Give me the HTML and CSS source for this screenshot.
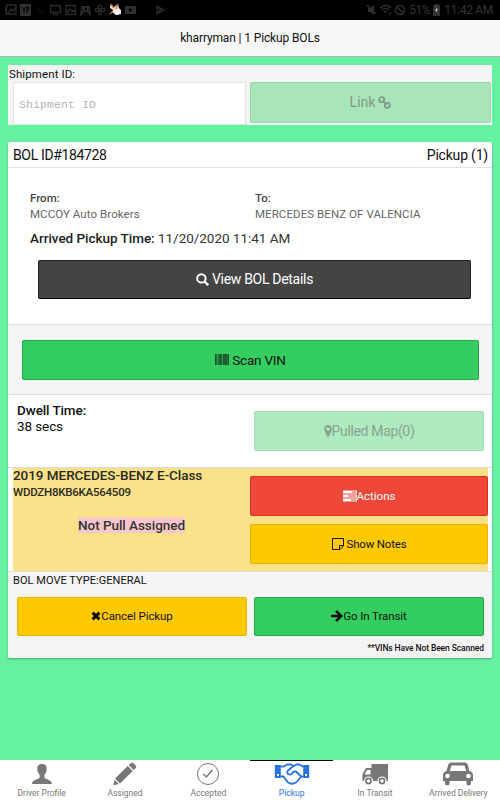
FILE: index.html
```html
<!DOCTYPE html>
<html lang="en">
<head>
<meta charset="utf-8">
<title>Pickup BOLs</title>
<link rel="stylesheet" href="styles.css">
</head>
<body>
<div class="status">
  <svg class="notif" width="170" height="20" viewBox="0 0 170 20" fill="none" stroke="#2b2b2b" stroke-width="1.3">
    <path d="M6 6v8h9M7 5h9v9H6zM8 13l3-4 2 2 3-4"/>
    <path d="M20 4h11v12H20z" fill="#303030" stroke="none"/><path d="M22 7l2 3v3m2-6l-2 3m3 3V7h1q2 1 0 3h-1" stroke="#000" stroke-width="1"/>
    <path d="M38 7q1 5 6 6" stroke="#101010"/>
    <path d="M50.500 5.500h10v7h-10zM53 14.500h5"/>
    <path d="M66 5.500h9.500v9H66zM67 13l3-4 2 2 1-1 2 3"/>
    <path d="M81 14l1-7h7l1 7-3-3h-3zM83 9h2m2 0h1" stroke-width="1.800"/>
    <path d="M100 10q-4-4 0-5 3 1 0 5 5-3 5 0-1 3-5 0 3 5 0 5-3-1 0-5-5 3-5 0 1-3 5 0"/>
    <path d="M110 5l4 2 4-3 1 4 2 2v4l-5 1-4-3 1-2-3-2z" fill="#f4ddcc" stroke="none"/><path d="M111 4l3 4m4-4l-2 5m-4 3l-2 2" stroke="#c46b38"/><path d="M115 10l4-1 1 5-4 1z" fill="#fff" stroke="none"/>
    <path d="M125 6h11v8h-11z" fill="#303030" stroke="none"/><path d="M129 8l4 2-4 2z" fill="#000" stroke="none"/>
    <path d="M157 6l7 4-7 4zM157 6l4 5m0-2l-4 5"/>
  </svg>
  <div class="system">
    <svg width="40" height="20" viewBox="0 0 40 20" fill="none" stroke="#303030" stroke-width="1.400">
      <path d="M2 8h2l4-3v10l-4-3H2z" fill="#303030" stroke="none"/><path d="M1 5l9 9"/>
      <path d="M14 8q6-5 11 0M16 10q4-3 7 0M18 12q2-1 3 0M24 12v3"/>
      <circle cx="34" cy="10" r="4.500"/><path d="M31 7l6 6"/>
    </svg>
    <span class="pct">51%</span>
    <svg class="battery" width="7" height="12" viewBox="0 0 7 12"><path fill="#333" d="M2 0h3v1h2v11H0V1h2z"/><path d="M4 3L2 7h1v2l2-4H4z" fill="#bbb"/></svg>
    <span class="clock">11:42 AM</span>
  </div>
</div>
<header class="title"><span>kharryman | 1 Pickup BOLs</span></header>
<main>
  <section class="shipment">
    <label for="ship">Shipment ID:</label>
    <div class="ship-row">
      <input id="ship" type="text" placeholder="Shipment ID">
      <button class="btn link" disabled><span>Link</span>
        <svg width="13" height="13" viewBox="0 0 13 13" fill="none" stroke="currentColor" stroke-width="1.700"><rect x="1.200" y="1.200" width="5" height="5" rx="2.200"/><rect x="6.800" y="6.800" width="5" height="5" rx="2.200"/><path d="M4.300 4.300l4.400 4.400"/></svg>
      </button>
    </div>
  </section>

  <section class="card">
    <div class="card-head"><span class="bol">BOL ID#184728</span><span class="count">Pickup (1)</span></div>
    <div class="details">
      <div class="route">
        <div><b>From:</b><p class="from">MCCOY Auto Brokers</p></div>
        <div><b>To:</b><p class="to">MERCEDES BENZ OF VALENCIA</p></div>
      </div>
      <p class="arrived"><b>Arrived Pickup Time:</b> <span>11/20/2020 11:41 AM</span></p>
      <button class="btn dark">
        <svg width="13" height="13" viewBox="0 0 13 13" fill="none" stroke="currentColor" stroke-width="2"><circle cx="5.400" cy="5.400" r="4.200"/><path d="M8.500 8.500l3.700 3.700" stroke-width="2.400"/></svg>
        <span>View BOL Details</span>
      </button>
    </div>
    <div class="scan">
      <button class="btn green">
        <svg width="14" height="11" viewBox="0 0 14 11"><path fill="#25793d" d="M0 0h14v11H0z"/><path fill="#174f27" d="M0 0h1v11H0zM3.500 0h.7v11h-.7zM5 0h1.200v11H5zM8.300 0h1.200v11H8.300zM10.200 0h1.300v11h-1.300zM13 0h1v11h-1z"/><path fill="#2fb255" d="M2.500 0h.8v11h-.8zM7 0h.6v11H7z"/></svg>
        <span>Scan VIN</span>
      </button>
    </div>
    <div class="dwell">
      <div class="dwell-text"><b>Dwell Time:</b><span>38 secs</span></div>
      <button class="btn map" disabled>
        <svg width="8" height="12" viewBox="0 0 8 12"><path fill="currentColor" fill-rule="evenodd" d="M4 0a3.800 3.800 0 0 1 3.800 4Q7.800 5.500 4.800 11.500Q4 12.400 3.200 11.500Q.2 5.500.2 4A3.800 3.800 0 0 1 4 0zm0 2.200a1.800 1.800 0 1 0 0 3.600 1.800 1.800 0 0 0 0-3.600z"/></svg><span>Pulled Map(0)</span>
      </button>
    </div>
    <div class="vehicle">
      <div class="vehicle-info">
        <b class="model">2019 MERCEDES-BENZ E-Class</b>
        <b class="vin">WDDZH8KB6KA564509</b>
        <p><mark>Not Pull Assigned</mark></p>
      </div>
      <div class="vehicle-actions">
        <button class="btn red"><svg width="14" height="12" viewBox="0 0 14 12"><path fill="currentColor" d="M0 .5h14v3H0zM0 4.500h14v3H0zM0 8.500h14v3H0z"/><path fill="#ef473a" d="M9 1.500h4v1H9zM5 5.500h8v1H5zM8 9.500h5v1H8z"/></svg><span>Actions</span></button>
        <button class="btn yellow notes"><svg width="12" height="12" viewBox="0 0 12 12" fill="none" stroke="currentColor"><path d="M.5.500h11v7.300L7.800 11.500H.5zM11.500 7.500h-4v4"/></svg><span>Show Notes</span></button>
      </div>
    </div>
    <div class="foot">
      <div class="move">BOL MOVE TYPE:GENERAL</div>
      <div class="foot-row">
        <button class="btn yellow"><svg width="10" height="10" viewBox="0 0 10 10"><path d="M1.600 1.600l6.800 6.800m0-6.800L1.600 8.400" stroke="currentColor" stroke-width="3"/></svg><span class="cancel">Cancel Pickup</span></button>
        <button class="btn green go"><svg width="12" height="12" viewBox="0 0 12 12" fill="none" stroke="currentColor" stroke-width="2.600"><path d="M0 6h10M5 .900L10.200 6 5 11.100"/></svg><span>Go In Transit</span></button>
      </div>
      <div class="warn"><span>**VINs Have Not Been Scanned</span></div>
    </div>
  </section>
</main>
<nav class="tabs">
  <a class="tab"><svg width="22" height="24" viewBox="0 0 22 24"><path fill="currentColor" d="M11 2c3.600 0 5 2.200 4.700 5.500-.2 2.500-1.200 4-2.300 5.200v2.700c.5 2 7.600 2 7.600 6.600H1c0-4.600 7.100-4.600 7.600-6.600v-2.700C7.500 11.500 6.500 10 6.300 7.500 6 4.200 7.400 2 11 2z"/></svg><span>Driver Profile</span></a>
  <a class="tab"><svg width="24" height="24" viewBox="0 0 24 24"><path fill="currentColor" d="M17.500 1.500q1.600-1.600 3.200 0l1.900 1.900q1.400 1.400 0 2.800l-1.900 1.900-5-5zM14.800 4l5 5L7 21.500l-5-5zM1.600 17.700l4.300 4.300-5.400 1.300z"/></svg><span>Assigned</span></a>
  <a class="tab"><svg width="24" height="24" viewBox="0 0 24 24" fill="none" stroke="currentColor"><circle cx="12" cy="12" r="10.500"/><path d="M7.300 12l3 3 6.200-7" stroke-width="1.500"/></svg><span>Accepted</span></a>
  <a class="tab active"><svg width="36" height="24" viewBox="0 0 36 24"><path fill="currentColor" d="M.8 3h6v13h-6zM29.200 3h6v13h-6z"/><path fill="none" stroke="currentColor" stroke-width="1.800" stroke-linejoin="round" d="M6.500 4.500h3.300L13 2.500h4l3 1.500 2.500-1.500h3l3 2h1M6.500 14.500h3l4.500 6q4 2.500 8 0l5.500-6h2M19.500 4L14 8.500q-1.500 2 0 3.500 2.500 1.500 4-.5l2-2h2l5.500 5.500"/><path fill="#fff" d="M3 12h2v2H3zM31 12h2v2h-2z"/></svg><span>Pickup</span></a>
  <a class="tab"><svg width="28" height="24" viewBox="0 0 28 24"><path fill="currentColor" fill-rule="evenodd" d="M10.500 2H27v17H1.500v-7L5 6h5.500zM9.500 8H6l-2.500 4.500h6z"/><g fill="currentColor" stroke="#fff" stroke-width="1.200"><circle cx="7.500" cy="19" r="4"/><circle cx="21" cy="19" r="4"/></g><g fill="#fff"><circle cx="7.500" cy="19" r="1.700"/><circle cx="21" cy="19" r="1.700"/></g></svg><span>In Transit</span></a>
  <a class="tab"><svg width="32" height="24" viewBox="0 0 32 24"><path fill="currentColor" fill-rule="evenodd" d="M9 .5h14q2 0 2.700 2L27.500 9q3.500 1 3.500 4v6h-2v2.500q0 2-2.300 2t-2.300-2V19H7.600v2.500q0 2-2.300 2t-2.300-2V19H1v-6q0-3 3.500-4l1.800-6.500Q7 .5 9 .5zM9.500 3.500L7.800 9h16.400l-1.700-5.500zM5.500 11.700a2.300 2.300 0 1 0 0 4.600 2.300 2.300 0 0 0 0-4.600zm21 0a2.300 2.300 0 1 0 0 4.600 2.300 2.300 0 0 0 0-4.600z"/></svg><span>Arrived Delivery</span></a>
</nav>
</body>
</html>
```
FILE: styles.css
```css
* { box-sizing: border-box; }
body { margin: 0; width: 500px; height: 800px; display: flex; flex-direction: column; overflow: hidden; background: #66f0a2; color: #111; font-family: Roboto, sans-serif; }
p { margin: 0; }
b { font-weight: 500; }
svg { flex: none; display: block; }
.status { height: 20px; flex: none; display: flex; justify-content: space-between; background: #000; color: #343434; font-size: 12px; line-height: 21px; }
.system { display: flex; align-items: center; padding-right: 7px; }
.system svg:first-child { margin-right: 3px; }
.pct { width: 21px; font-size: 12px; letter-spacing: -.5px; }
.battery { margin: 0 4px 0 3px; }
.clock { letter-spacing: -.3px; }
.title { height: 37px; flex: none; background: #f8f8f8; border-bottom: 1px solid #b2b2b2; text-align: center; font-size: 12px; line-height: 36px; letter-spacing: -.13px; }
main { flex: 1; padding: 7.500px 8px 0; }
.shipment { height: 60.500px; background: #f4f4f4; }
.shipment label { display: block; height: 17.500px; padding-left: 1px; font-size: 11.500px; line-height: 18px; letter-spacing: .1px; }
.ship-row { display: flex; gap: 4px; padding: 0 1px 0 5px; }
.ship-row input { width: 233px; height: 43px; border: 1px solid #e4e4e4; background: #fff; padding: 2px 5px 0; font: 11.500px "Liberation Mono", monospace; letter-spacing: .1px; outline: 0; }
input::placeholder { color: #b5b5b5; opacity: 1; }
.btn { display: flex; align-items: center; justify-content: center; height: 39px; padding: 0 0 1px; border: 1px solid; border-radius: 2px; font-family: Roboto, sans-serif; font-size: 11.500px; color: #111; }
.link { width: 241px; height: 41px; gap: 3px; background: #a8e5b9; border-color: #98d6aa; color: #829b88; font-size: 14px; }
.card { height: 516px; margin-top: 17px; background: #fff; border-radius: 2px; box-shadow: 0 1px 2px rgba(0,0,0,.3); }
.card-head { height: 26px; display: flex; justify-content: space-between; padding: 0 4px 0 5px; border-bottom: 1px solid #e2e2e2; font-size: 14px; line-height: 26px; }
.bol { letter-spacing: -.35px; }
.count { letter-spacing: -.2px; }
.details { height: 156px; padding: 22px 22px 0; }
.route { display: flex; font-size: 11.500px; line-height: 16px; color: #666; }
.route > div { flex: 0 0 225px; white-space: nowrap; }
.route b { color: #444; }
.from, .to { letter-spacing: .07px; }
.arrived { margin-top: 6px; font-size: 13.500px; line-height: 20px; letter-spacing: -.03px; color: #333; }
.arrived b { color: #222; }
.dark { width: 433px; margin: 12px 0 0 8px; gap: 3px; background: #444; border-color: #222; border-bottom-color: #000; color: #fff; font-size: 14px; letter-spacing: -.3px; }
.scan { height: 71px; padding: 15px 13px 0 14px; background: #f4f4f4; border: solid #ddd; border-width: 1px 0; }
.green { background: #34cd60; border-color: #28a54c; }
.scan .btn { width: 100%; height: 40px; gap: 3px; font-size: 13.500px; letter-spacing: -.2px; }
.dwell { height: 73px; display: flex; justify-content: space-between; padding: 7px 8px 0 9px; border-bottom: 1px solid #ddd; font-size: 13.500px; }
.dwell-text { display: flex; flex-direction: column; line-height: 16px; letter-spacing: -.1px; }
.map { width: 230px; height: 40px; margin-top: 9px; background: #aeebbf; border-color: #a4dfb5; color: #8ba391; font-size: 14px; letter-spacing: -.35px; }
.vehicle { height: 103px; margin: 0 4px 0 5px; display: flex; justify-content: space-between; background: #f8e188; }
.vehicle-info { width: 232px; display: flex; flex-direction: column; color: #2b2a22; }
.model { font-size: 13.500px; line-height: 15px; letter-spacing: -.05px; white-space: nowrap; }
.vin { font-size: 11.500px; line-height: 18px; letter-spacing: -.24px; }
.vehicle-info p { margin-top: 16px; padding-left: 5px; text-align: center; font-size: 13.500px; line-height: 17px; letter-spacing: -.05px; }
mark { background: #f9c6c9; color: #333; font-weight: 500; }
.vehicle-actions { width: 238px; padding-top: 8px; display: flex; flex-direction: column; gap: 8px; }
.vehicle-actions .btn { height: 40px; }
.red { background: #ef473a; border-color: #da3024; color: #fff; }
.yellow { background: #ffc900; border-color: #e6b500; }
.notes { gap: 3px; letter-spacing: -.2px; }
.foot { height: 87px; background: #f4f4f4; border-top: 1px solid #ddd; border-radius: 0 0 2px 2px; }
.move { height: 25px; padding-left: 5px; font-size: 11px; line-height: 17px; letter-spacing: .05px; }
.foot-row { display: flex; justify-content: space-between; padding: 0 8px 0 9px; }
.foot-row .btn { width: 230px; letter-spacing: -.08px; }
.warn { padding-right: 8px; text-align: right; font-size: 8.500px; font-weight: 500; line-height: 25px; letter-spacing: -.1px; }
.tabs { height: 40px; flex: none; display: flex; background: #fff; }
.tab { flex: 1; display: flex; flex-direction: column; align-items: center; padding-top: 2px; color: #777; font-size: 8.500px; line-height: 14px; white-space: nowrap; }
.tab.active { color: #2872df; border-top: 1px solid #000; padding-top: 1px; }
```
